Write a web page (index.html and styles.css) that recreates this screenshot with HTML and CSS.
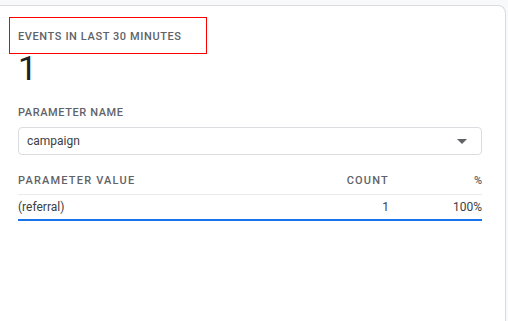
FILE: index.html
```html
<!DOCTYPE html>
<html>
<head>
<meta charset="utf-8">
<link rel="stylesheet" href="styles.css">
</head>
<body>
<div class="card">
  <div class="title">EVENTS IN LAST 30 MINUTES</div>
  <div class="count">1</div>
  <div class="label">PARAMETER NAME</div>
  <div class="select">
    <span class="select-text">campaign</span>
    <svg class="arrow" width="10" height="5" viewBox="0 0 10 5"><path d="M0 0 L10 0 L5 5 Z" fill="#5f6368"/></svg>
  </div>
  <div class="table">
    <div class="row head">
      <div class="cell">PARAMETER VALUE</div>
      <div class="cell num">COUNT</div>
      <div class="cell num">%</div>
    </div>
    <div class="row body">
      <div class="cell">(referral)</div>
      <div class="cell num">1</div>
      <div class="cell num">100%</div>
    </div>
  </div>
  <div class="highlight"></div>
</div>
</body>
</html>
```

FILE: styles.css
```css
html, body {
  margin: 0;
  padding: 0;
  background: #f8f9fa;
  font-family: Roboto, "Liberation Sans", sans-serif;
  overflow: hidden;
}

.card {
  position: relative;
  margin-top: 5px;
  width: 506px;
  height: 316px;
  box-sizing: border-box;
  background: #fff;
  border-top: 1px solid #dadce0;
  border-right: 1px solid #dadce0;
  border-top-right-radius: 8px;
  padding: 23px 23px 0 18px;
}

.title {
  font-size: 11px;
  line-height: 16px;
  font-weight: 500;
  letter-spacing: 0.6px;
  color: #5f6368;
}

.count {
  margin-top: 3px;
  font-size: 34px;
  line-height: 40px;
  font-weight: 400;
  color: #202124;
}

.label {
  margin-top: 17px;
  font-size: 11px;
  line-height: 16px;
  font-weight: 500;
  letter-spacing: 0.6px;
  color: #5f6368;
}

.select {
  margin-top: 6px;
  height: 28px;
  box-sizing: border-box;
  border: 1px solid #dadce0;
  border-radius: 4px;
  display: flex;
  align-items: center;
  justify-content: space-between;
  padding: 0 14px 0 8px;
}

.select-text {
  font-size: 12px;
  color: #3c4043;
}

.table {
  margin-top: 18px;
}

.row {
  display: grid;
  grid-template-columns: 1fr 120px 93px;
}

.head {
  padding-bottom: 5px;
  border-bottom: 1px solid #e8eaed;
}

.head .cell {
  font-size: 11px;
  line-height: 16px;
  font-weight: 500;
  letter-spacing: 1.2px;
  color: #5f6368;
}

.head .num:last-child {
  letter-spacing: 0;
}

.body {
  padding: 4px 0;
  border-bottom: 2px solid #1a73e8;
}

.body .cell {
  font-size: 12px;
  line-height: 16px;
  color: #3c4043;
}

.num {
  text-align: right;
}

.highlight {
  position: absolute;
  left: 9px;
  top: 11px;
  width: 198px;
  height: 37px;
  box-sizing: border-box;
  border: 1px solid #ff0000;
}
```
